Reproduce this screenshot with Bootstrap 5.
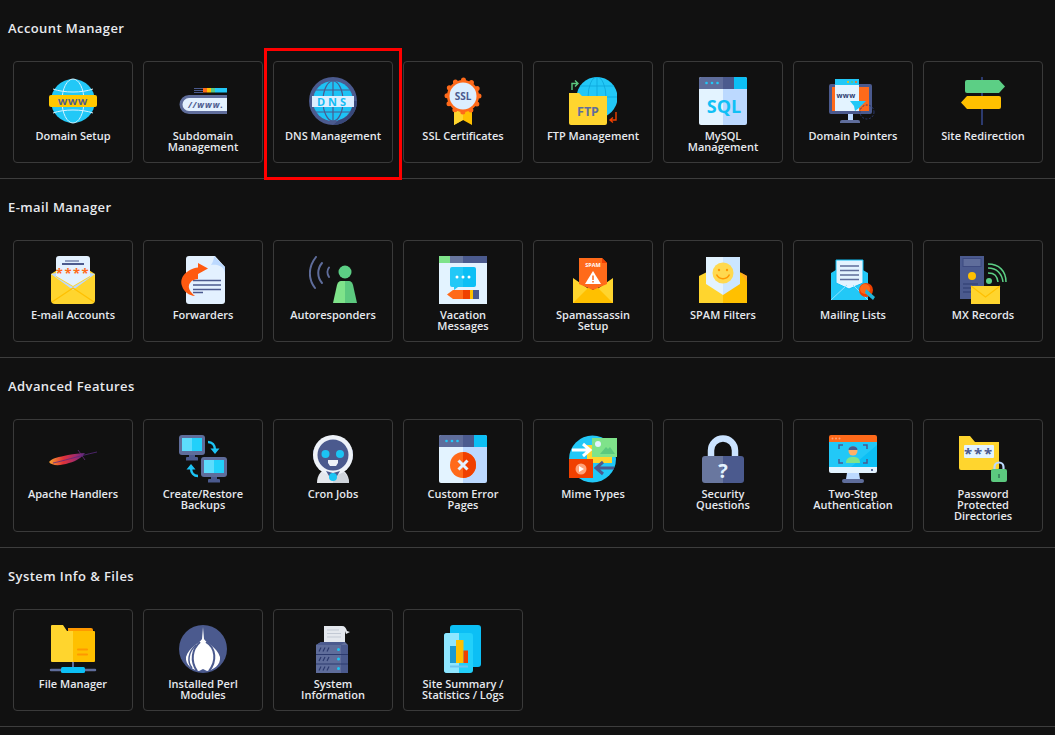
<!DOCTYPE html>
<html lang="en">
<head>
    <meta charset="UTF-8">
    <meta name="viewport" content="width=device-width, initial-scale=1.0">
    <title>Control Panel</title>
    <link href="https://cdn.jsdelivr.net/npm/bootstrap@5.3.0/dist/css/bootstrap.min.css" rel="stylesheet">
    <style>
        body {
            background-color: #111111;
            color: #e6e9ee;
            font-family: "Open Sans", "Liberation Sans", sans-serif;
        }
        .panel-section {
            padding: 19px 0 0 8px;
            border-bottom: 1px solid #3d3d3d;
        }
        .panel-title {
            font-size: 13px;
            font-weight: 600;
            line-height: 18px;
            letter-spacing: .42px;
            color: #e8eaee;
            margin: 0 0 24px;
        }
        .tool-grid {
            gap: 10px;
            padding: 0 0 15px 5px;
        }
        .tool-card {
            width: 120px;
            padding: 16px 10px 10px;
            background: transparent;
            border: 1px solid #3a3a3a;
            border-radius: 4px;
            color: #e6e9ee;
            text-decoration: none;
            text-align: center;
            font-size: 11px;
            font-weight: 600;
            line-height: 11px;
            position: relative;
        }
        .tool-ico {
            width: 48px;
            height: 48px;
            display: block;
            margin: -1px auto 5px;
        }
        .ico-txt {
            font-family: "Open Sans", "Liberation Sans", sans-serif;
            font-weight: 700;
            text-anchor: middle;
        }
        .marked-box {
            position: absolute;
            top: -14px;
            left: -10px;
            right: -10px;
            bottom: -18px;
            border: 3px solid #ff0000;
            pointer-events: none;
        }
    </style>
</head>
<body>
    <main>
        <!-- Account Manager -->
        <section class="panel-section">
            <h6 class="panel-title">Account Manager</h6>
            <div class="d-flex flex-wrap tool-grid">
                <a href="#" class="tool-card">
                    <svg class="tool-ico" viewBox="0 0 48 48"><circle cx="24" cy="24" r="22" fill="#22c8f7"/><g fill="none" stroke="#d5f3ff" stroke-width="1"><ellipse cx="24" cy="24" rx="11" ry="22"/><path d="M4 12C15 16 33 16 44 12M4 36C15 32 33 32 44 36"/></g><rect y="18" width="48" height="12" rx="2" fill="#ffc800"/><text class="ico-txt" x="24" y="28" font-size="9.5" letter-spacing=".8" fill="#4b5a8e">WWW</text></svg>
                    Domain Setup
                </a>
                <a href="#" class="tool-card">
                    <svg class="tool-ico" viewBox="0 0 48 48"><path d="M48 18H10a9.5 9.5 0 0 0 0 19H48z" fill="#5f6d9b"/><path d="M48 21H10a6.5 6.5 0 0 0 0 13H48z" fill="#e3f1ff"/><text class="ico-txt" x="27" y="31" font-size="8.5" letter-spacing="1" fill="#4b5a8e" font-style="italic">//www.</text><path d="M15 11.500h9M15 13.500h9M15 15.500h9" stroke="#4b5a8e"/><rect x="24" y="11" width="4" height="4.500" fill="#ff6a1a"/><rect x="28" y="11" width="4" height="4.500" fill="#ffc000"/><rect x="32" y="11" width="4" height="4.500" fill="#5cc97f"/><rect x="36" y="11" width="12" height="4.500" fill="#22c8f7"/></svg>
                    Subdomain Management
                </a>
                <a href="#" class="tool-card">
                    <svg class="tool-ico" viewBox="0 0 48 48"><circle cx="24" cy="24" r="24" fill="#4b5a8e"/><circle cx="24" cy="24" r="20" fill="#1dc2f5"/><g fill="none" stroke="#4b5a8e" stroke-width="1.200"><ellipse cx="24" cy="24" rx="10" ry="20"/><path d="M24 4V44M7 13H41M7 35H41"/></g><path d="M30 43C38 42 44 34 44 24h4C48 36 38 48 24 48z" fill="#39487a"/><rect x="3" y="19" width="42" height="11" fill="#dceeff"/><text class="ico-txt" x="24" y="28.500" font-size="11" letter-spacing="3" fill="#14bdf4">DNS</text></svg>
                    DNS Management
                    <span class="marked-box"></span>
                </a>
                <a href="#" class="tool-card">
                    <svg class="tool-ico" viewBox="0 0 48 48"><path d="M15 32H33V48L24 43 15 48z" fill="#ffc000"/><path d="M15 32h9V43l-9 5z" fill="#ffd52e"/><circle cx="24" cy="19" r="16" fill="#ff6a1a" stroke="#ff6a1a" stroke-width="5" stroke-linecap="round" stroke-dasharray="0 8.380"/><circle cx="24" cy="19" r="13.500" fill="#dceeff"/><text class="ico-txt" x="24" y="23" font-size="10" fill="#4b5a8e">SSL</text></svg>
                    SSL Certificates
                </a>
                <a href="#" class="tool-card">
                    <svg class="tool-ico" viewBox="0 0 48 48"><circle cx="28" cy="20.500" r="20.500" fill="#22c8f7"/><g fill="none" stroke="#0fa8dc" stroke-width=".9"><ellipse cx="28" cy="20.500" rx="9" ry="20.500"/><path d="M28 0V41M8 20H48M11 9H45"/></g><path d="M0 16H10L13 19H38V46a2 2 0 0 1-2 2H2a2 2 0 0 1-2-2z" fill="#ffd52e"/><text class="ico-txt" x="19" y="39" font-size="12.500" fill="#5f6d9b">FTP</text><path d="M3 13V6.500H8M6 3.500l3 3-3 3" fill="none" stroke="#5cc97f" stroke-width="1.400"/><path d="M47 35V43H41M44 40.500l-3 2.500 3 2.500" fill="none" stroke="#f04000" stroke-width="1.400"/></svg>
                    FTP Management
                </a>
                <a href="#" class="tool-card">
                    <svg class="tool-ico" viewBox="0 0 48 48"><path d="M2 0H24V48H2a2 2 0 0 1-2-2V2a2 2 0 0 1 2-2z" fill="#e3f3ff"/><path d="M24 0H46a2 2 0 0 1 2 2V46a2 2 0 0 1-2 2H24z" fill="#bcd9ff"/><path d="M2 0H24V12H0V2a2 2 0 0 1 2-2z" fill="#5f6d9b"/><rect x="24" y="0" width="11" height="12" fill="#4b5a8e"/><path d="M35 0H46a2 2 0 0 1 2 2V12H35z" fill="#0cbff5"/><g fill="#22c8f7"><circle cx="7.500" cy="6" r="1.300"/><circle cx="13" cy="6" r="1.300"/><circle cx="18.500" cy="6" r="1.300"/></g><text class="ico-txt" x="25" y="36" font-size="18" fill="#10c0f5">SQL</text></svg>
                    MySQL Management
                </a>
                <a href="#" class="tool-card">
                    <svg class="tool-ico" viewBox="0 0 48 48"><path d="M19 36h5v7h-5z" fill="#bcd9ff"/><path d="M11 45a2 2 0 0 1 2-2H29a2 2 0 0 1 2 2v1H11z" fill="#5f6d9b"/><rect y="7" width="43" height="30" rx="2" fill="#4b5a8e"/><rect x="3" y="10" width="37" height="24" fill="#ff6a1a"/><rect x="6" y="2" width="24" height="32" fill="#e3f3ff"/><rect x="6" y="2" width="24" height="6" fill="#22c8f7"/><circle cx="19" cy="5" r="1" fill="#ffc000"/><circle cx="23" cy="5" r="1" fill="#5cc97f"/><circle cx="27" cy="5" r="1" fill="#ff6a1a"/><text class="ico-txt" x="17" y="21" font-size="7" letter-spacing=".4" fill="#2c3a6e">www</text><path d="M37 24L21 24 25 29 26 34 30 31z" fill="#22c8f7"/><circle cx="38" cy="35" r="7" fill="none" stroke="#2c3a6e" stroke-width="1" stroke-dasharray="2 1.500"/></svg>
                    Domain Pointers
                </a>
                <a href="#" class="tool-card">
                    <svg class="tool-ico" viewBox="0 0 48 48"><rect x="22" y="0" width="2" height="48" fill="#2c3a6e"/><path d="M8 3H40L46 9.500 40 16H8a2 2 0 0 1-2-2V5a2 2 0 0 1 2-2z" fill="#5ccf85"/><path d="M40 19a2 2 0 0 1 2 2v9a2 2 0 0 1-2 2H8L2 25.500 8 19z" fill="#ffc000"/></svg>
                    Site Redirection
                </a>
            </div>
        </section>

        <!-- E-mail Manager -->
        <section class="panel-section">
            <h6 class="panel-title">E-mail Manager</h6>
            <div class="d-flex flex-wrap tool-grid">
                <a href="#" class="tool-card">
                    <svg class="tool-ico" viewBox="0 0 48 48"><path d="M2 18L24 4 46 18V44a4 4 0 0 1-4 4H6a4 4 0 0 1-4-4z" fill="#ffd52e"/><path d="M7 3a3 3 0 0 1 3-3H38a3 3 0 0 1 3 3V20L24 30 7 20z" fill="#e3f1ff"/><path d="M2 18l5-1v4L24 31l17-10v-4l5 1L24 34z" fill="#bcd9ff"/><path d="M16 5H30" stroke="#5f6d9b" stroke-width="1.200"/><path d="M13 8H35" stroke="#4b5a8e" stroke-width="2"/><text class="ico-txt" x="24" y="22" font-size="13" letter-spacing="1.500" fill="#ff6a1a">****</text><path d="M3 46L24 32 45 46" fill="none" stroke="#ffc000" stroke-width="1.200"/></svg>
                    E-mail Accounts
                </a>
                <a href="#" class="tool-card">
                    <svg class="tool-ico" viewBox="0 0 48 48"><path d="M10 0H36L46 11V45a3 3 0 0 1-3 3H10a3 3 0 0 1-3-3V3a3 3 0 0 1 3-3z" fill="#e3f1ff"/><path d="M35 0L46 11V18C46 10 38 8 32 9 34 6 35 3 35 0z" fill="#bcd9ff"/><path d="M14 24.500H42M14 29H42M14 33.500H42M14 36.500H24" stroke="#4b5a8e" stroke-width="1.400"/><path d="M29 12.500L19 7V11.500C8 13 0 21 3 30 5 36 10 39.500 16 40 11 36 8 31 11 27 13 24 16 23 19 23V18z" fill="#ff5a10"/></svg>
                    Forwarders
                </a>
                <a href="#" class="tool-card">
                    <svg class="tool-ico" viewBox="0 0 48 48"><g fill="none" stroke="#5f6d9b" stroke-width="2" stroke-linecap="round"><path d="M7 1C-1 11-1 23 6 32"/><path d="M13 7C8 13 8 21 13 27"/><path d="M20 11.500C18 14 18 18 20 21"/></g><circle cx="36" cy="16" r="6.500" fill="#5ccf85"/><path d="M32 25H36V47H24L28 29C28.500 27 30 25 32 25z" fill="#7fe38a"/><path d="M36 25H40C42 25 43.500 27 44 29L48 47H36z" fill="#5cc97f"/></svg>
                    Autoresponders
                </a>
                <a href="#" class="tool-card">
                    <svg class="tool-ico" viewBox="0 0 48 48"><rect width="48" height="48" fill="#e3f3ff"/><rect width="11" height="7" fill="#7fe38a"/><rect x="11" width="13" height="7" fill="#69779f"/><rect x="24" width="24" height="7" fill="#4b5a8e"/><path d="M13 11H24V31H19L15 34V31H13a2 2 0 0 1-2-2V13a2 2 0 0 1 2-2z" fill="#22c8f7"/><path d="M24 11H35a2 2 0 0 1 2 2V29a2 2 0 0 1-2 2H24z" fill="#0cbff5"/><g fill="#fff"><circle cx="18" cy="21" r="1.500"/><circle cx="24" cy="21" r="1.500"/><circle cx="30" cy="21" r="1.500"/></g><path d="M14 34H24V43H14L8 38.500z" fill="#ff6a1a"/><rect x="24" y="34" width="7" height="9" fill="#f04000"/><rect x="31" y="34" width="3" height="9" fill="#ffc000"/><path d="M34 34H40V43H34z" fill="#4b5a8e"/></svg>
                    Vacation Messages
                </a>
                <a href="#" class="tool-card">
                    <svg class="tool-ico" viewBox="0 0 48 48"><path d="M10 12H38V24H10z" fill="#3d4a80"/><path d="M4 22L24 36 44 22V47H4z" fill="#ffd52e"/><path d="M4 47L20 31 24 34 28 31 44 47z" fill="#ffc000"/><path d="M10 2H33L38 7V28L24 34 10 28z" fill="#ff6a1a"/><path d="M33 2L38 7H33z" fill="#f04000"/><text class="ico-txt" x="24" y="11" font-size="5.500" fill="#fff">SPAM</text><path d="M24 15L32 28H16z" fill="#fff"/><path d="M24 19.500v4.500M24 25v1.500" stroke="#ff6a1a" stroke-width="1.500"/></svg>
                    Spamassassin Setup
                </a>
                <a href="#" class="tool-card">
                    <svg class="tool-ico" viewBox="0 0 48 48"><path d="M24 8L0 20V47H24z" fill="#ffd52e"/><path d="M24 8L48 20V47H24z" fill="#ffc000"/><path d="M41 16L48 20V26z" fill="#ffa726"/><path d="M7 1H24V39L7 28z" fill="#e3f3ff"/><path d="M24 1H41V28L24 39z" fill="#cbe6ff"/><circle cx="24" cy="17" r="10.500" fill="#ffd94f"/><circle cx="20" cy="14" r="1.200" fill="#ff9800"/><circle cx="28" cy="14" r="1.200" fill="#ff9800"/><path d="M17.500 18.500C20 24 28 24 30.500 18.500" fill="none" stroke="#ff9800" stroke-width="1.500"/></svg>
                    SPAM Filters
                </a>
                <a href="#" class="tool-card">
                    <svg class="tool-ico" viewBox="0 0 48 48"><path d="M2 17L20 6 39 17V44H2z" fill="#22c8f7"/><path d="M7 4H34V27L20 33 7 27z" fill="#e3f3ff" stroke="#0cbff5" stroke-width="1"/><path d="M11 10H30M11 14.500H30M11 19H30M11 23.500H30" stroke="#5f6d9b" stroke-width="1.500"/><path d="M2 44L18 29M39 44L24 29" stroke="#8fe3ff" stroke-width="1"/><circle cx="37" cy="34" r="7" fill="#f04000"/><circle cx="36" cy="33" r="5" fill="#ff6a1a"/><path d="M37 33L46 41 44 44 36 37z" fill="#22b6dc"/></svg>
                    Mailing Lists
                </a>
                <a href="#" class="tool-card">
                    <svg class="tool-ico" viewBox="0 0 48 48"><rect x="1" width="24" height="43" fill="#4b5a8e"/><rect x="4" y="2.500" width="18" height="8" fill="#5f6d9b" stroke="#3d4a80"/><circle cx="13" cy="20" r="4" fill="#ffc000"/><path d="M4 28H19M4 32H13M4 36H16" stroke="#2c3a6e" stroke-width="1.200"/><circle cx="30" cy="25" r="3" fill="#5ccf85"/><g fill="none" stroke="#5ccf85" stroke-width="1.500"><path d="M29 17C36 17 38 20 39 26"/><path d="M29 12C38 12 43 18 44 26"/><path d="M29 8C40 8 47 15 47 26"/></g><rect x="12" y="30" width="29" height="18" fill="#ffd52e"/><path d="M12 30L26.500 41 41 30" fill="none" stroke="#ffc000" stroke-width="1.200"/></svg>
                    MX Records
                </a>
            </div>
        </section>

        <!-- Advanced Features -->
        <section class="panel-section">
            <h6 class="panel-title">Advanced Features</h6>
            <div class="d-flex flex-wrap tool-grid">
                <a href="#" class="tool-card">
                    <svg class="tool-ico" viewBox="0 0 48 48"><defs><linearGradient id="featherGrad" x1="0" x2="1" y1="0" y2="0"><stop offset="0" stop-color="#f9a12e"/><stop offset=".4" stop-color="#e0323a"/><stop offset=".75" stop-color="#a02a6e"/><stop offset="1" stop-color="#5b2a7f"/></linearGradient></defs><path d="M0 27C3 23 10 22 19 20 25 19 31 18 36 18 33 22 28 26 20 28 11 31 3 31 0 27z" fill="url(#featherGrad)"/><path d="M4 28C14 26 26 22 48 17" fill="none" stroke="#5b2a7f" stroke-width=".8"/><path d="M29 15L36 25" stroke="#6b2a7f" stroke-width=".8"/></svg>
                    Apache Handlers
                </a>
                <a href="#" class="tool-card">
                    <svg class="tool-ico" viewBox="0 0 48 48"><rect width="26" height="20" rx="3" fill="#5f6d9b"/><rect x="3" y="3" width="20" height="13" fill="#22d0fa"/><rect x="3" y="3" width="10" height="13" fill="#5ddcfc"/><path d="M10 20h6v3h-6zM7 23a1 1 0 0 1 1-1H18a1 1 0 0 1 1 1v2.500H7z" fill="#4b5a8e"/><rect x="22" y="22" width="26" height="20" rx="3" fill="#5f6d9b"/><rect x="25" y="25" width="20" height="13" fill="#22d0fa"/><rect x="25" y="25" width="10" height="13" fill="#5ddcfc"/><path d="M32 42h6v3h-6zM29 45a1 1 0 0 1 1-1H40a1 1 0 0 1 1 1v2.500H29z" fill="#4b5a8e"/><g fill="none" stroke="#1cc4f4" stroke-width="2.500"><path d="M29 7C33 7 36 10 36 15"/><path d="M19 41C15 41 12 38 12 33"/></g><path d="M31.500 13.500H40.500L36 19zM7.500 34.500H16.500L12 29z" fill="#1cc4f4"/></svg>
                    Create/Restore Backups
                </a>
                <a href="#" class="tool-card">
                    <svg class="tool-ico" viewBox="0 0 48 48"><rect x="4" y="14" width="4" height="11" rx="2" fill="#39487a"/><rect x="40" y="14" width="4" height="11" rx="2" fill="#39487a"/><path d="M8 48C8 40 12 33 24 33S40 40 40 48z" fill="#e4e7ec"/><path d="M24 33C32 33 40 40 40 48H24z" fill="#cfd4db"/><circle cx="24" cy="20" r="20" fill="#eef2f8"/><circle cx="24" cy="20" r="15.500" fill="#4b5a8e"/><circle cx="16.500" cy="19" r="4" fill="#1cc4f4"/><circle cx="31" cy="19" r="4" fill="#1cc4f4"/><path d="M19 25h10v3l-2 3H21l-2-3z" fill="#eef2f8"/><path d="M17 36L24 38 31 36 28 41H20z" fill="#4b5a8e"/><circle cx="24" cy="42" r="4" fill="#1cc4f4"/></svg>
                    Cron Jobs
                </a>
                <a href="#" class="tool-card">
                    <svg class="tool-ico" viewBox="0 0 48 48"><path d="M2 0H24V48H2a2 2 0 0 1-2-2V2a2 2 0 0 1 2-2z" fill="#e3f3ff"/><path d="M24 0H46a2 2 0 0 1 2 2V46a2 2 0 0 1-2 2H24z" fill="#bcd9ff"/><path d="M2 0H24V12H0V2a2 2 0 0 1 2-2z" fill="#5f6d9b"/><rect x="24" y="0" width="11" height="12" fill="#4b5a8e"/><path d="M35 0H46a2 2 0 0 1 2 2V12H35z" fill="#0cbff5"/><g fill="#22c8f7"><circle cx="7.500" cy="6" r="1.300"/><circle cx="13" cy="6" r="1.300"/><circle cx="18.500" cy="6" r="1.300"/></g><circle cx="24" cy="30" r="13" fill="#ff6a1a"/><path d="M24 17a13 13 0 0 1 0 26z" fill="#f04000"/><path d="M19.500 25.500l9 9M28.500 25.500l-9 9" stroke="#e3f3ff" stroke-width="3"/></svg>
                    Custom Error Pages
                </a>
                <a href="#" class="tool-card">
                    <svg class="tool-ico" viewBox="0 0 48 48"><circle cx="23.500" cy="24" r="23.500" fill="#22c8f7"/><rect x="18" y="10" width="25" height="18" fill="#ffd52e"/><rect x="23" y="3" width="25" height="19" fill="#7fe38a"/><circle cx="29" cy="9" r="3" fill="#e3f3ff"/><path d="M31 19L37 12 39 14 41 12 46 19z" fill="#5cc97f"/><rect y="24" width="24" height="19" fill="#f04000"/><circle cx="12" cy="34" r="5.500" fill="#ffa37a"/><path d="M10 31v6l5-3z" fill="#fff"/><path d="M3 15H20M14 9L21 15 14 21" fill="none" stroke="#fff" stroke-width="3"/><path d="M45 33H28M34 27L27 33 34 39" fill="none" stroke="#4b5a8e" stroke-width="3"/></svg>
                    Mime Types
                </a>
                <a href="#" class="tool-card">
                    <svg class="tool-ico" viewBox="0 0 48 48"><path d="M12 22V15.500a12 12 0 0 1 24 0V22" fill="none" stroke="#cbe3ff" stroke-width="6.500"/><path d="M6 21H24V48H6a3 3 0 0 1-3-3V24a3 3 0 0 1 3-3z" fill="#69779f"/><path d="M24 21H42a3 3 0 0 1 3 3V45a3 3 0 0 1-3 3H24z" fill="#4b5a8e"/><text class="ico-txt" x="24" y="43" font-size="20" fill="#e3f3ff">?</text></svg>
                    Security Questions
                </a>
                <a href="#" class="tool-card">
                    <svg class="tool-ico" viewBox="0 0 48 48"><path d="M2 0H46a2 2 0 0 1 2 2V7H0V2a2 2 0 0 1 2-2z" fill="#ff6a1a"/><g fill="#ffa37a"><circle cx="3.500" cy="3.500" r="1"/><circle cx="7" cy="3.500" r="1"/><circle cx="10.500" cy="3.500" r="1"/></g><rect y="7" width="48" height="25" fill="#22c8f7"/><path d="M48 10V32H22z" fill="#0cbff5"/><path d="M0 32H48V36a2 2 0 0 1-2 2H2a2 2 0 0 1-2-2z" fill="#e3f3ff"/><rect x="42" y="34" width="2" height="2" fill="#5f6d9b"/><path d="M18 38H30L31 44H17z" fill="#bcd9ff"/><path d="M15 44H33a2 2 0 0 1 0 4H15a2 2 0 0 1 0-4z" fill="#5f6d9b"/><path d="M10 14V10H14M34 10H38V14M38 24V28H34M14 28H10V24" fill="none" stroke="#4b5a8e" stroke-width="1.500"/><path d="M17 28C17 23 20 22 24 22S31 23 31 28z" fill="#7fe38a"/><circle cx="24" cy="16" r="4.500" fill="#ffb066"/><path d="M19.500 15C19.500 10 28.500 10 28.500 15z" fill="#4b5a8e"/></svg>
                    Two-Step Authentication
                </a>
                <a href="#" class="tool-card">
                    <svg class="tool-ico" viewBox="0 0 48 48"><path d="M0 1H11L16 7H40V33a2 2 0 0 1-2 2H2a2 2 0 0 1-2-2z" fill="#ffd52e"/><rect x="5" y="10" width="30" height="13" rx="1" fill="#e3f3ff"/><text class="ico-txt" x="20" y="24" font-size="15" letter-spacing="1.800" fill="#4b5a8e">***</text><path d="M35.500 35V32a4.500 4.500 0 0 1 9 0v3" fill="none" stroke="#bcd9ff" stroke-width="2.200"/><rect x="32" y="34" width="16" height="13" rx="2" fill="#5cc97f"/><path d="M40 39v4" stroke="#3d8a60" stroke-width="2"/></svg>
                    Password Protected Directories
                </a>
            </div>
        </section>

        <!-- System Info & Files -->
        <section class="panel-section">
            <h6 class="panel-title">System Info &amp; Files</h6>
            <div class="d-flex flex-wrap tool-grid">
                <a href="#" class="tool-card">
                    <svg class="tool-ico" viewBox="0 0 48 48"><path d="M19 3H42a2 2 0 0 1 2 2V9H19z" fill="#ff9800"/><path d="M3 0H14L18 6H24V37H3a1 1 0 0 1-1-1V1a1 1 0 0 1 1-1z" fill="#ffd52e"/><path d="M24 6H45a1 1 0 0 1 1 1V36a1 1 0 0 1-1 1H24z" fill="#ffc000"/><path d="M29 24.500H38M29 29.500H38" stroke="#ff9800" stroke-width="2.200" stroke-linecap="round"/><path d="M24 37V44" stroke="#5f6d9b" stroke-width="2"/><path d="M2 45H46" stroke="#5f6d9b" stroke-width="2.500" stroke-linecap="round"/><rect x="12" y="42" width="24" height="6" rx="1.500" fill="#0cbff5"/></svg>
                    File Manager
                </a>
                <a href="#" class="tool-card">
                    <svg class="tool-ico" viewBox="0 0 48 48"><circle cx="24" cy="24" r="24" fill="#4b5a8e"/><path d="M24 2L25 14C27 18 38 22 41 32 42 40 34 45 28 46L24 44 20 46C14 45 6 40 7 32 10 22 21 18 23 14z" fill="#fff"/><g fill="none" stroke="#4b5a8e"><path d="M21 17C13 24 11 36 18 46" stroke-width="2"/><path d="M27 17C37 23 38 36 30 46" stroke-width="2"/><path d="M17 20C9 27 8 37 13 43" stroke-width="1.500"/></g></svg>
                    Installed Perl Modules
                </a>
                <a href="#" class="tool-card">
                    <svg class="tool-ico" viewBox="0 0 48 48"><path d="M15 1H33C36 1 37 3 38 6L41 7 37 9 36 6V18H15z" fill="#e4e8ee"/><path d="M18 5H30M18 8.500H32M18 12H32" stroke="#c2c9d4"/><path d="M7 20L12 17H36L39 20V47a1 1 0 0 1-1 1H7z" fill="#5f6d9b"/><path d="M12 17H36L32 20H7z" fill="#4b5a8e"/><path d="M32 20H39V48H32z" fill="#4b5a8e"/><path d="M7 29.500H39M7 39H39" stroke="#2c3a6e" stroke-width="1.200"/><g fill="#1cc4f4"><circle cx="29.500" cy="24.500" r="1.500"/><circle cx="29.500" cy="34" r="1.500"/><circle cx="29.500" cy="43.500" r="1.500"/></g><g stroke="#2c3a6e" stroke-width="1.200"><path d="M10 26.500l2-4M14 26.500l2-4M18 26.500l2-4M10 36l2-4M14 36l2-4M18 36l2-4M10 45.500l2-4M14 45.500l2-4M18 45.500l2-4"/></g></svg>
                    System Information
                </a>
                <a href="#" class="tool-card">
                    <svg class="tool-ico" viewBox="0 0 48 48"><rect x="11" width="31" height="42" rx="3" fill="#0cbff5"/><rect x="5" y="8" width="29" height="40" rx="3" fill="#22d0fa"/><path d="M8 8H20V48H8a3 3 0 0 1-3-3V11a3 3 0 0 1 3-3z" fill="#8fe6ff"/><rect x="11" y="21" width="6" height="17" fill="#1c9ad0"/><rect x="17" y="15" width="7.500" height="23" fill="#ffc000"/><rect x="24.500" y="25.500" width="4.500" height="12.500" fill="#f04000"/><path d="M11 41.500H29" stroke="#6fc4ef" stroke-width="2"/></svg>
                    Site Summary / Statistics / Logs
                </a>
            </div>
        </section>
    </main>

    <script src="https://cdn.jsdelivr.net/npm/bootstrap@5.3.0/dist/js/bootstrap.bundle.min.js"></script>
</body>
</html>
